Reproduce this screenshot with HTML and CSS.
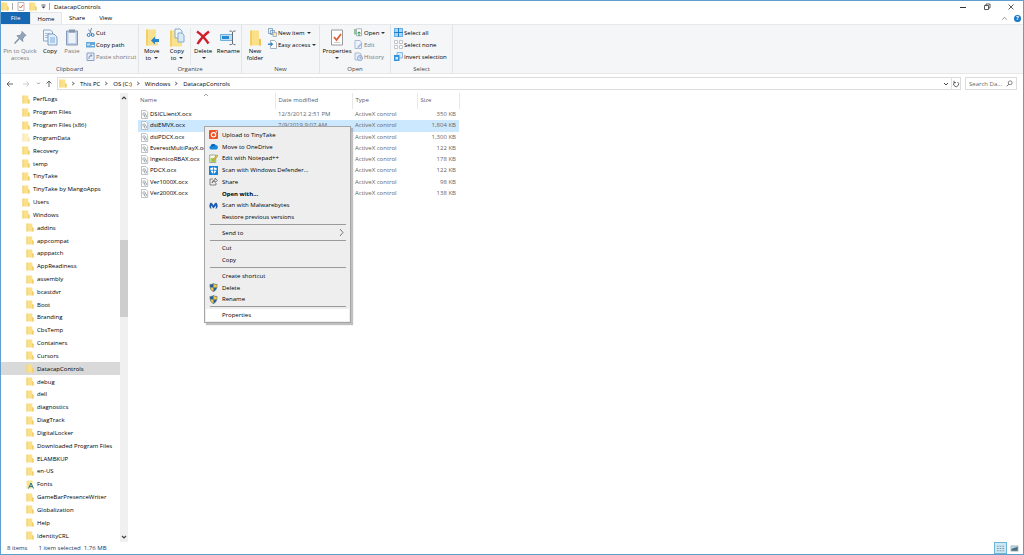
FILE: index.html
```html
<!DOCTYPE html>
<html lang="en">
<head>
<meta charset="utf-8">
<title>DatacapControls</title>
<link rel="stylesheet" href="styles.css">
</head>
<body>
<svg class="defs" aria-hidden="true">
  <symbol id="folder" viewBox="0 0 8 9"><path d="M.5.5h5.800v3.600l1.200.8v3.600h-7z" fill="#fbe08a"/><path d="M.5.5h1v8h-1z" fill="#f4d06f"/><path d="M6.300 4.100l1.200.8v3.600H6.300z" fill="#eec75c"/></symbol>
  <symbol id="file" viewBox="0 0 8 9"><path d="M1 .5h4.500L7.200 2.200v6.300H1z" fill="#fdfdfd" stroke="#a5a9ad" stroke-width=".7"/><circle cx="3.600" cy="4" r="1.300" fill="none" stroke="#8d979f" stroke-width=".7"/><circle cx="5" cy="6" r="1.200" fill="none" stroke="#8d979f" stroke-width=".7"/></symbol>
  <symbol id="pages" viewBox="0 0 16 18"><path d="M1.500 1.500h7l2 2v9h-9z" fill="#eef5fc" stroke="#8aa9c9"/><path d="M3 5h5M3 7h5M3 9h5" stroke="#9dbfe0"/><path d="M6 5.500h6l3 3v8H6z" fill="#e2effb" stroke="#7e9fc3"/><path d="M8 9.500h5M8 11.500h5M8 13.500h5" stroke="#7aaee0"/></symbol>
  <symbol id="shield" viewBox="0 0 10 10"><path d="M5 .5C4 1.300 2.500 1.700 1 1.700 1 6 2 8.200 5 9.600 8 8.200 9 6 9 1.700 7.500 1.700 6 1.300 5 .5z" fill="#1f5f9e"/><path d="M5 .5C6 1.300 7.500 1.700 9 1.700V5H5zM1.100 5H5v4.600C2.500 8.400 1.400 7 1.100 5z" fill="#f2c94a"/><path d="M5 .5C4 1.300 2.500 1.700 1 1.700 1 6 2 8.200 5 9.600 8 8.200 9 6 9 1.700 7.500 1.700 6 1.300 5 .5z" fill="none" stroke="#5d6a70" stroke-width=".6"/></symbol>
</svg>
<div class="window">
  <header class="titlebar">
    <svg class="fold"><use href="#folder"/></svg>
    <span class="bar"></span>
    <button class="plain" aria-label="Properties"><svg class="qat" viewBox="0 0 8 9"><path d="M1 .5h6v8H1z" fill="#fff" stroke="#999" stroke-width=".7"/><path d="M2.300 4.500l1.300 1.500 2.400-3" fill="none" stroke="#d85a38"/></svg></button>
    <button class="plain" aria-label="New folder"><svg class="fold"><use href="#folder"/></svg></button>
    <button class="plain" aria-label="Customize"><svg class="drop" viewBox="0 0 5 5"><path d="M.5 1h4" stroke="#333" stroke-width=".8"/><path d="M.5 2.500h4l-2 2z" fill="#333"/></svg></button>
    <span class="bar"></span>
    <h1>DatacapControls</h1>
    <div class="controls">
      <button aria-label="Minimize"><svg viewBox="0 0 8 8"><path d="M1 4.500h6" stroke="#333"/></svg></button>
      <button aria-label="Restore"><svg viewBox="0 0 8 8"><path d="M1.500 2.500h4v4h-4zM3 2.500V1h4v4H5.500" fill="none" stroke="#333" stroke-width=".8"/></svg></button>
      <button aria-label="Close"><svg viewBox="0 0 8 8"><path d="M1.500 1.500l5 5m0-5l-5 5" stroke="#333" stroke-width=".8"/></svg></button>
    </div>
  </header>
  <nav class="tabs">
    <button class="tab file">File</button><button class="tab active">Home</button><button class="tab">Share</button><button class="tab">View</button>
    <button class="plain up" aria-label="Collapse ribbon"><svg viewBox="0 0 6 6"><path d="M1 4l2-2 2 2" fill="none" stroke="#888" stroke-width=".8"/></svg></button>
    <button class="help" aria-label="Help">?</button>
  </nav>
  <section class="ribbon">
    <div class="group clipboard">
      <div class="tools">
        <button class="big dim pin"><svg viewBox="0 0 16 18"><path d="M10 3l4 4-1.500.5-2 3 .3 2.500L5 7.200l3-.2 2-2.500z" fill="#93a4ba" stroke="#8394aa"/><path d="M7.500 9.800L2.500 15" stroke="#8394aa" stroke-width="1.500"/></svg><span>Pin to Quick<br>access</span></button>
        <button class="big copy"><svg><use href="#pages"/></svg><span>Copy</span></button>
        <button class="big dim paste"><svg viewBox="0 0 16 18"><path d="M2.500 2.500h11v14h-11z" fill="#c0cde2" stroke="#8799b8"/><path d="M4.500 4.500h7v10h-7z" fill="#eef3fb"/><path d="M5 1h6v3H5z" fill="#8696ad"/></svg><span>Paste</span></button>
        <div class="small">
          <button><svg viewBox="0 0 9 9"><path d="M5.500 0L4 5.500M2.500 1.500L6 6" stroke="#718daa" fill="none"/><circle cx="2.700" cy="7" r="1.500" fill="none" stroke="#2880c4"/><circle cx="6.700" cy="7" r="1.400" fill="none" stroke="#2880c4"/></svg>Cut</button>
          <button><svg viewBox="0 0 9 9"><path d="M0 2h9v5.500H0z" fill="#62a8dc"/><path d="M1 3.500l1 2 1-2 1 2" stroke="#fff" fill="none" stroke-width=".7"/><path d="M5.500 5.500H8" stroke="#fff"/></svg>Copy path</button>
          <button class="dim"><svg viewBox="0 0 9 9"><path d="M1 1h7v7.500H1z" fill="#e8eff9" stroke="#8ba0c4"/><path d="M3 7V5q0-1.500 3-1.500M4.500 2.300L6 3.500 4.500 5" fill="none" stroke="#6483b8" stroke-width=".8"/></svg>Paste shortcut</button>
        </div>
      </div>
      <div class="caption">Clipboard</div>
    </div>
    <div class="group organize">
      <div class="tools">
        <button class="big"><svg viewBox="0 0 16 18"><path d="M2 1h10v9l2 1v6H2z" fill="#fae18e"/><path d="M2 1h2v16H2z" fill="#f3cf6c"/><path d="M7 12l4-4v2.500h4v3h-4V16z" fill="#2788cf"/></svg><span>Move<br>to <i class="caret"></i></span></button>
        <button class="big"><svg viewBox="0 0 16 18"><path d="M1 2h10v9l2 1v6H1z" fill="#fae18e"/><path d="M1 2h2v16H1z" fill="#f3cf6c"/><path d="M6 .5h5l2 2v7H6z" fill="#eef6fd" stroke="#83abd1"/><path d="M9 4.500h4l2 2v7H9z" fill="#dceaf8" stroke="#83abd1"/></svg><span>Copy<br>to <i class="caret"></i></span></button>
        <button class="big del"><svg viewBox="0 0 16 18"><path d="M2 3q6 4 11.500 12M14 3Q7 8 2.500 15.500" fill="none" stroke="#cf1f2e" stroke-width="2.400"/></svg><span>Delete<br><i class="caret"></i></span></button>
        <button class="big"><svg viewBox="0 0 16 18"><path d="M.5 6h12v6H.5z" fill="#bedff7" stroke="#6faedd"/><path d="M2 7.500h7v3H2z" fill="#2589d3"/><path d="M9.500 2.500q2.500 0 3 1 .5-1 3-1M12.500 3.500v12M9.500 16.200q2.500 0 3-1 .5 1 3 1" fill="none" stroke="#626c76"/></svg><span>Rename</span></button>
      </div>
      <div class="caption">Organize</div>
    </div>
    <div class="group new">
      <div class="tools">
        <button class="big"><svg viewBox="0 0 16 18"><path d="M3 2h9v8l2 1v6H3z" fill="#fbe08a"/><path d="M3 2h2v15H3z" fill="#f4cf69"/><path d="M12 10l2 1v6h-2z" fill="#edc45b"/></svg><span>New<br>folder</span></button>
        <div class="small">
          <button><svg viewBox="0 0 9 9"><path d="M.5.5h4v5h-4zM2.500 2.500h4v4h-4z" fill="#e7f2fc" stroke="#7397ba" stroke-width=".8"/><path d="M5 4.500h3.500v4H5z" fill="#f9e9b4" stroke="#8ca2b5" stroke-width=".7"/></svg>New item <i class="caret"></i></button>
          <button><svg viewBox="0 0 9 9"><path d="M2.500.5h4l2 2v6h-6z" fill="#fff" stroke="#8ba0b3" stroke-width=".8"/><path d="M0 3.500h3V2l2.300 2.200L3 6.300V5H0z" fill="#3089cf"/></svg>Easy access <i class="caret"></i></button>
        </div>
      </div>
      <div class="caption">New</div>
    </div>
    <div class="group open">
      <div class="tools">
        <button class="big"><svg viewBox="0 0 16 18"><path d="M2.500 1.500h11v15h-11z" fill="#fff" stroke="#999"/><path d="M5 8.500l2.500 3 4.500-6" fill="none" stroke="#df6038" stroke-width="1.800"/><path d="M5 14h6" stroke="#ccc"/></svg><span>Properties<br><i class="caret"></i></span></button>
        <div class="small">
          <button><svg viewBox="0 0 9 9"><path d="M2.500.8h5v7h-5z" fill="#fff" stroke="#98a2a9" stroke-width=".8"/><path d="M1 1v5.500M5 8V4M3.300 5.500L5 3.800l1.700 1.700" fill="none" stroke="#269447"/></svg>Open <i class="caret"></i></button>
          <button class="dim"><svg viewBox="0 0 9 9"><path d="M1 .5h5l1.500 2v6H1z" fill="#edf3fc" stroke="#9baeca" stroke-width=".8"/><path d="M3 7l4.500-4.500L8.500 4 4.500 8z" fill="#a6bde0"/></svg>Edit</button>
          <button class="dim"><svg viewBox="0 0 9 9"><path d="M1 1h5l1 1v6H1z" fill="#e8effa" stroke="#9baeca" stroke-width=".8"/><circle cx="6" cy="6" r="2.500" fill="#dbe7f8" stroke="#7f9ac5" stroke-width=".8"/><path d="M6 4.500V6h1.500" fill="none" stroke="#6583b3" stroke-width=".7"/></svg>History</button>
        </div>
      </div>
      <div class="caption">Open</div>
    </div>
    <div class="group select">
      <div class="tools">
        <div class="small">
          <button><svg viewBox="0 0 9 9"><path d="M0 0h9v9H0z" fill="#62b1ec"/><path d="M1 1h3v3H1zM5 1h3v3H5zM1 5h3v3H1zM5 5h3v3H5z" fill="#a9d6f8"/><path d="M4.500 0v9M0 4.500h9" stroke="#2080cc"/></svg>Select all</button>
          <button><svg viewBox="0 0 9 9"><path d="M.5.5h3v3h-3zM5.500.5h3v3h-3zM.5 5.500h3v3h-3zM5.500 5.500h3v3h-3z" fill="#fff" stroke="#b3b9be" stroke-width=".8"/></svg>Select none</button>
          <button><svg viewBox="0 0 9 9"><path d="M3 .5h5.500V6H3z" fill="#d6eafb" stroke="#75b1e0" stroke-width=".8"/><path d="M0 3h5.500v6H0z" fill="#3393dc"/><path d="M1.500 5h2.500v2.500H1.500z" fill="#d9edfd"/></svg>Invert selection</button>
        </div>
      </div>
      <div class="caption">Select</div>
    </div>
  </section>
  <div class="address">
    <button class="plain nav" aria-label="Back"><svg viewBox="0 0 8 8"><path d="M7 4H1m2.500-2.500L1 4l2.500 2.500" fill="none" stroke="#555" stroke-width=".9"/></svg></button>
    <button class="plain nav fwd" aria-label="Forward"><svg viewBox="0 0 8 8"><path d="M1 4h6M4.500 1.500L7 4 4.500 6.500" fill="none" stroke="#ccc"/></svg></button>
    <button class="plain recent" aria-label="Recent"><svg viewBox="0 0 8 8"><path d="M2.500 3l1.500 1.500L5.500 3" fill="none" stroke="#777"/></svg></button>
    <button class="plain nav" aria-label="Up"><svg viewBox="0 0 8 8"><path d="M4 7V1M1.500 3.500L4 1l2.500 2.500" fill="none" stroke="#555" stroke-width=".9"/></svg></button>
    <div class="crumbs">
      <svg class="fold"><use href="#folder"/></svg>
      <i class="chev"></i><a href="#">This PC</a><i class="chev"></i><a href="#">OS (C:)</a><i class="chev"></i><a href="#">Windows</a><i class="chev"></i><a href="#">DatacapControls</a>
      <button class="plain end" aria-label="History"><svg viewBox="0 0 8 8"><path d="M2 3l2 2 2-2" fill="none" stroke="#444"/></svg></button>
      <button class="plain refresh" aria-label="Refresh"><svg viewBox="0 0 8 8"><path d="M5.500 2A2.500 2.500 0 1 1 2.500 2.200M2 .8v1.900h2" fill="none" stroke="#555" stroke-width=".9"/></svg></button>
    </div>
    <label class="search"><input type="text" placeholder="Search Da..." aria-label="Search"><svg viewBox="0 0 8 8"><circle cx="4.800" cy="3.200" r="2.200" fill="none" stroke="#555" stroke-width=".8"/><path d="M3.200 4.800L.8 7.200" stroke="#555"/></svg></label>
  </div>
  <main>
    <aside>
      <ul class="tree" id="tree"></ul>
      <div class="scroll"><button class="plain" aria-label="Scroll up"><svg viewBox="0 0 8 8"><path d="M2 5l2-2 2 2" fill="none" stroke="#444" stroke-width="1.200"/></svg></button><div class="track"><div class="thumb"></div></div><button class="plain" aria-label="Scroll down"><svg viewBox="0 0 8 8"><path d="M2 3l2 2 2-2" fill="none" stroke="#444" stroke-width="1.200"/></svg></button></div>
    </aside>
    <section class="content">
      <table>
        <colgroup><col class="c-name"><col class="c-date"><col class="c-type"><col class="c-size"></colgroup>
        <thead><tr><th>Name<svg class="sort" viewBox="0 0 6 4"><path d="M1 3l2-2 2 2" fill="none" stroke="#888" stroke-width=".8"/></svg></th><th>Date modified</th><th>Type</th><th>Size</th></tr></thead>
        <tbody id="files"></tbody>
      </table>
    </section>
  </main>
  <footer><span>8 items</span><span>1 item selected&nbsp; 1.76 MB</span>
    <div class="views"><button class="on" aria-label="Details"><svg viewBox="0 0 10 9"><path d="M1 2h2M4 2h2M7 2h2M1 4.500h2M4 4.500h2M7 4.500h2M1 7h2M4 7h2M7 7h2" stroke="#8495a2"/></svg></button><button aria-label="Large icons"><svg viewBox="0 0 10 9"><path d="M1 1.500h8v6H1z" fill="#b9d4e2" stroke="#a8b0b5" stroke-width=".7"/><path d="M1.500 7V5l3-1 4-1.500V7z" fill="#496f7d"/></svg></button></div>
  </footer>
  <div class="menu" role="menu">
    <button><svg viewBox="0 0 9 9"><rect width="9" height="9" rx="1" fill="#f05023"/><circle cx="4.500" cy="4.800" r="2.200" fill="none" stroke="#fff" stroke-width="1.100"/><circle cx="7.300" cy="1.700" r=".7" fill="#fff"/></svg>Upload to TinyTake</button>
    <button><svg viewBox="0 0 9 9"><path d="M2 7.500a1.900 1.900 0 0 1-.2-3.700A2.700 2.700 0 0 1 6.500 3 2.300 2.300 0 0 1 7.300 7.500z" fill="#1787dc"/><path d="M1.800 3.800A2.700 2.700 0 0 1 6.500 3L3 5z" fill="#0963b9"/></svg>Move to OneDrive</button>
    <button><svg viewBox="0 0 9 9"><path d="M.7 1h6v7.500h-6z" fill="#f7fae6" stroke="#7a8b82" stroke-width=".7"/><path d="M1.500 4h4.500v4H1.500z" fill="#a8d357"/><path d="M3.500 6L8 .8l1 .9L4.500 7z" fill="#f0c439" stroke="#75683b" stroke-width=".4"/></svg>Edit with Notepad++</button>
    <button><svg viewBox="0 0 9 9"><path d="M0 0h9v9H0z" fill="#1684da"/><path d="M4.500 1q-1.500 1-3.200 1 0 4.500 3.200 6 3.200-1.500 3.200-6-1.700 0-3.200-1z" fill="#fff"/><path d="M4.500 1v7M1.300 4.300h6.400" stroke="#1684da" stroke-width=".8"/></svg>Scan with Windows Defender...</button>
    <button><svg viewBox="0 0 9 9"><path d="M4 2H1v6h6V6M3 6q.3-3 3-3V1l2.500 2.500L6 5.500V4Q4 4 3 6z" fill="none" stroke="#555" stroke-width=".7"/></svg>Share</button>
    <button class="strong"><svg viewBox="0 0 9 9"></svg>Open with...</button>
    <button><svg viewBox="0 0 9 9"><path d="M1.800 1.500Q3.500 2 4.500 4.500 5.500 2 7.200 1.500 9.300 3.500 8.300 6.500 7.700 7.800 6.300 8 7.200 6.500 6.800 4.500L4.500 7.500 2.200 4.500Q1.800 6.500 2.700 8 1.300 7.800.7 6.500-.3 3.500 1.800 1.500z" fill="#1d59ad"/></svg>Scan with Malwarebytes</button>
    <button><svg viewBox="0 0 9 9"></svg>Restore previous versions</button>
    <hr>
    <button><svg viewBox="0 0 9 9"></svg>Send to<svg class="sub" viewBox="0 0 5 9"><path d="M1 1l3 3.500L1 8" fill="none" stroke="#444" stroke-width=".7"/></svg></button>
    <hr>
    <button><svg viewBox="0 0 9 9"></svg>Cut</button>
    <button><svg viewBox="0 0 9 9"></svg>Copy</button>
    <hr>
    <button><svg viewBox="0 0 9 9"></svg>Create shortcut</button>
    <button><svg><use href="#shield"/></svg>Delete</button>
    <button><svg><use href="#shield"/></svg>Rename</button>
    <hr>
    <button class="hover"><svg viewBox="0 0 9 9"></svg>Properties</button>
  </div>
</div>
<script src="app.js"></script>
</body>
</html>
```
FILE: styles.css
```css
* { box-sizing: border-box; }
body { margin: 0; font: 6px/8px "Open Sans", "Noto Sans", sans-serif; color: #000; background: #fff; }
button { font: inherit; color: inherit; border: 0; padding: 0; background: none; display: flex; align-items: center; white-space: nowrap; }
a { color: inherit; text-decoration: none; }
svg { display: block; flex: none; width: 9px; height: 9px; }
.defs { position: absolute; width: 0; height: 0; }
.window { position: relative; display: flex; flex-direction: column; height: 100vh; border: 1px solid #5f9fd0; }
.fold { width: 8px; height: 9px; }
.caret { display: inline-block; border: 2px solid transparent; border-top-color: #333; border-bottom: 0; vertical-align: middle; margin-left: 1px; }

.titlebar { display: flex; align-items: center; height: 11px; }
.titlebar .bar { width: 1px; height: 7px; background: #aaa; margin: 0 4px 0 3px; }
.titlebar .qat { width: 8px; margin-right: 4px; }
.titlebar .drop { width: 5px; height: 5px; margin-left: 4px; }
.titlebar h1 { margin: 0; font-size: 6px; font-weight: 400; }
.controls { display: flex; gap: 16px; margin-left: auto; padding-right: 8px; }
.controls svg { width: 8px; height: 8px; }

.tabs { display: flex; align-items: stretch; height: 12px; }
.tab { padding: 0 7px; justify-content: center; }
.tab.file { width: 29px; background: #1768b3; color: #fff; }
.tab.active { width: 32px; background: #f5f6f7; border: 1px solid #e3e5e7; border-bottom: 0; }
.up { margin-left: auto; }
.up svg { width: 7px; height: 7px; }
.help { align-self: center; justify-content: center; width: 7px; height: 7px; margin: 0 2px 0 6px; border-radius: 50%; background: #1778c8; color: #fff; font-weight: 700; }

.ribbon { display: flex; height: 50px; background: #f5f6f7; border: 1px solid #e6e8ea; border-width: 1px 0; }
.group { display: flex; flex-direction: column; border-right: 1px solid #e2e4e6; }
.tools { display: flex; flex: 1; padding-top: 3px; }
.caption { text-align: center; color: #444; }
.big { flex-direction: column; justify-content: flex-start; flex: 1; line-height: 7px; text-align: center; gap: 1px; }
.big svg { width: 16px; height: 19px; }
.dim { color: #777; }
.small { display: flex; flex-direction: column; gap: 3px; }
.small button { gap: 1px; height: 9px; }
.clipboard { width: 138px; }
.pin { flex: 0 0 38px; }
.copy, .paste { flex: 0 0 22px; }
.clipboard .small { padding-left: 3px; }
.organize { width: 103px; }
.new { width: 78px; }
.new .big { flex: 0 0 26px; }
.open { width: 71px; }
.open .big { flex: 0 0 34px; }
.select { width: 62px; }
.select .small { padding-left: 3px; }
.del { border-left: 1px solid #e6e8ea; }

.address { display: flex; align-items: center; height: 19px; padding-left: 5px; }
.nav svg { width: 8px; height: 8px; }
.fwd { margin-left: 8px; }
.recent { margin: 0 3px 0 5px; }
.recent svg { width: 7px; height: 7px; }
.crumbs { display: flex; align-items: center; flex: 1; height: 13px; margin: 0 4px; padding-left: 1px; border: 1px solid #dcdcdc; }
.chev { width: 3px; height: 3px; border: 1px solid #777; border-width: 1px 1px 0 0; transform: rotate(45deg); margin: 0 6px 0 4px; }
.end { margin-left: auto; }
.crumbs .plain svg { width: 8px; height: 8px; }
.refresh { height: 11px; margin-left: 1px; border-left: 1px solid #e0e0e0; }
.search { display: flex; align-items: center; width: 52px; height: 13px; margin-right: 6px; border: 1px solid #dcdcdc; padding: 0 3px; }
.search input { flex: 1; min-width: 0; border: 0; padding: 0; font: inherit; outline: 0; }
.search input::placeholder { color: #666; }
.search svg { width: 7px; height: 7px; }

main { display: flex; flex: 1; min-height: 0; }
aside { display: flex; width: 127px; }
.tree { flex: 1; display: grid; grid-auto-rows: 1fr; margin: 0; padding: 0; list-style: none; }
.tree li { display: flex; align-items: center; gap: 3px; padding-left: 21px; }
.tree li.deep { padding-left: 25px; }
.tree li.current { background: #d9d9d9; }
.tree .faded { opacity: .5; }
.scroll { width: 8px; display: flex; flex-direction: column; background: #f0f0f0; }
.scroll svg { width: 8px; height: 10px; }
.track { flex: 1; padding-top: 137px; }
.thumb { height: 77px; background: #cdcdcd; }
.content { flex: 1; padding-left: 10px; }
table { border-collapse: collapse; table-layout: fixed; width: 321px; height: 106px; }
.c-name { width: 137px; } .c-date { width: 77px; } .c-type { width: 65px; } .c-size { width: 42px; }
th, td { height: 11px; padding: 0 3px; text-align: left; font-weight: 400; white-space: nowrap; color: #666; line-height: 7px; }
th { position: relative; height: 16px; padding-bottom: 2px; color: #4c607a; border-right: 1px solid #e8e8e8; }
th:first-child, td:first-child { padding-left: 2px; }
.sort { position: absolute; left: 65px; top: 0; width: 6px; height: 4px; }
td:first-child { color: #000; }
td:last-child { text-align: right; }
td span { display: flex; align-items: center; gap: 1px; }
tr.selected { background: #cce8ff; }

footer { display: flex; align-items: center; gap: 11px; height: 12px; padding-left: 6px; color: #1e3455; }
.views { display: flex; margin-left: auto; padding-right: 2px; gap: 1px; }
.views button { padding: 0 1px; border: 1px solid transparent; height: 12px; }
.views svg { width: 9px; height: 9px; }
.views .on { background: #cce8f5; border-color: #6bb5d9; }

.menu { position: absolute; left: 203px; top: 125px; width: 147px; height: 197px; display: flex; flex-direction: column; padding: 2px 1px 1px; background: #eee; border: 1px solid #a5a5a5; box-shadow: 2px 2px 1px #8888; }
.menu button { flex: 1; min-height: 0; gap: 4px; padding: 0 5px 0 3px; }
.menu .sub { width: 5px; margin-left: auto; }
.menu hr { width: 136px; height: 1px; margin: 1px 0 2px 4px; border: 0; background: #9a9a9a; }
.menu .strong { font-weight: 700; }
.menu .hover { background: #fff; }
```
FILE: app.js
```js
const roots = ["PerfLogs", "Program Files", "Program Files (x86)", "ProgramData", "Recovery", "temp", "TinyTake", "TinyTake by MangoApps", "Users", "Windows"];
const children = ["addins", "appcompat", "apppatch", "AppReadiness", "assembly", "bcastdvr", "Boot", "Branding", "CbsTemp", "Containers", "Cursors", "DatacapControls", "debug", "dell", "diagnostics", "DiagTrack", "DigitalLocker", "Downloaded Program Files", "ELAMBKUP", "en-US", "Fonts", "GameBarPresenceWriter", "Globalization", "Help", "IdentityCRL"];
const fontIcon = '<svg class="fold" viewBox="0 0 8 9"><path d="M.5.5h6v8h-6z" fill="#fbe293"/><path d="M2.500 8.500L5 3l2.500 5.500M3.500 6.500h3" fill="none" stroke="#1b7390"/></svg>';
const row = (name, deep) => {
  const cls = [deep ? "deep" : "", name === "DatacapControls" ? "current" : ""].join(" ").trim();
  const icon = name === "Fonts" ? fontIcon : `<svg class="fold${name === "ProgramData" ? " faded" : ""}"><use href="#folder"/></svg>`;
  return `<li class="${cls}">${icon}${name}</li>`;
};
document.getElementById("tree").innerHTML = roots.map(n => row(n, false)).join("") + children.map(n => row(n, true)).join("");

const files = [
  ["DSICLientX.ocx", "12/3/2012 2:51 PM", "350 KB"],
  ["dsiEMVX.ocx", "7/9/2019 9:07 AM", "1,804 KB"],
  ["dsiPDCX.ocx", "", "1,300 KB"],
  ["EverestMultiPayX.ocx", "", "122 KB"],
  ["IngenicoRBAX.ocx", "", "178 KB"],
  ["PDCX.ocx", "", "122 KB"],
  ["Ver1000X.ocx", "", "98 KB"],
  ["Ver2000X.ocx", "", "138 KB"]
];
document.getElementById("files").innerHTML = files.map(([n, d, s]) =>
  `<tr class="${n === "dsiEMVX.ocx" ? "selected" : ""}"><td><span><svg><use href="#file"/></svg>${n}</span></td><td>${d}</td><td>ActiveX control</td><td>${s}</td></tr>`).join("");
```
